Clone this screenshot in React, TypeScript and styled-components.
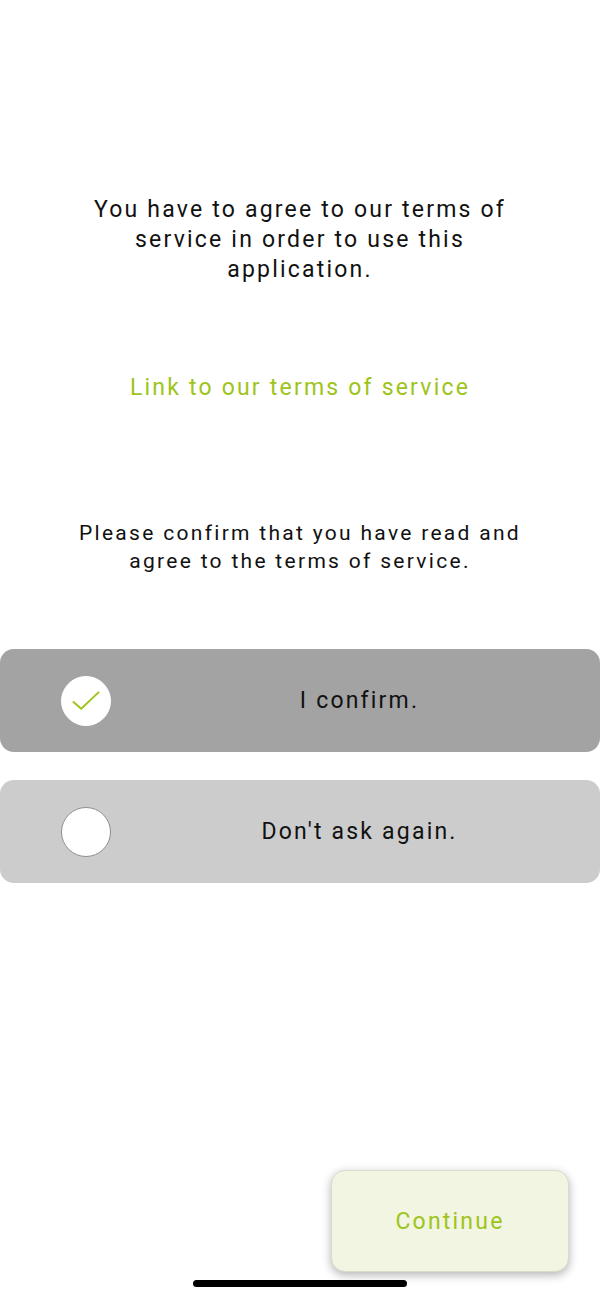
import React, { useState } from 'react';
import styled, { createGlobalStyle } from 'styled-components';

const GlobalStyle = createGlobalStyle`
	html, body {
		margin: 0;
		padding: 0;
		background: #ffffff;
	}
	body {
		font-family: Roboto, 'Liberation Sans', sans-serif;
		color: #111111;
	}
`;

const ACCENT = '#9dc41a';

const Page = styled.main`
	width: 600px;
	min-height: 1299px;
	display: flex;
	flex-direction: column;
	align-items: stretch;
	box-sizing: border-box;
`;

const Intro = styled.p`
	margin: 195px 88px 0;
	font-size: 23px;
	line-height: 30px;
	letter-spacing: 2.2px;
	text-align: center;
`;

const TermsLink = styled.a`
	align-self: center;
	margin-top: 89px;
	font-size: 23px;
	line-height: 28px;
	letter-spacing: 2.2px;
	color: ${ACCENT};
	text-decoration: none;
	cursor: pointer;
`;

const Prompt = styled.p`
	margin: 117px 70px 0;
	font-size: 21px;
	line-height: 28px;
	letter-spacing: 2.3px;
	text-align: center;
`;

const Options = styled.div`
	margin-top: 74px;
	display: flex;
	flex-direction: column;
	gap: 28px;
`;

const OptionRow = styled.button<{ $tone: 'dark' | 'light' }>`
	display: flex;
	align-items: center;
	height: 103px;
	padding: 0 0 0 61px;
	border: none;
	border-radius: 14px;
	background: ${(p) => (p.$tone === 'dark' ? '#a3a3a3' : '#cccccc')};
	font-family: inherit;
	cursor: pointer;
	text-align: left;
`;

const Radio = styled.span<{ $checked: boolean }>`
	flex: none;
	width: 50px;
	height: 50px;
	border-radius: 50%;
	background: #ffffff;
	box-sizing: border-box;
	border: 1px solid ${(p) => (p.$checked ? '#ffffff' : '#8f8f8f')};
	display: flex;
	align-items: center;
	justify-content: center;
`;

const OptionLabel = styled.span`
	flex: 1;
	text-align: center;
	font-size: 23px;
	letter-spacing: 2.2px;
	color: #111111;
	padding-left: 8px;
`;

const Footer = styled.footer`
	margin-top: auto;
	display: flex;
	flex-direction: column;
	align-items: stretch;
	padding-bottom: 12px;
`;

const ContinueButton = styled.button`
	align-self: flex-end;
	margin-right: 31px;
	width: 238px;
	height: 102px;
	border: 1px solid #d8dccb;
	border-radius: 14px;
	background: #f1f5e2;
	box-shadow: 0 3px 10px rgba(0, 0, 0, 0.3);
	font-family: inherit;
	font-size: 23px;
	letter-spacing: 2.2px;
	color: ${ACCENT};
	cursor: pointer;
`;

const HomeBar = styled.div`
	align-self: center;
	margin-top: 8px;
	width: 214px;
	height: 7px;
	border-radius: 4px;
	background: #000000;
`;

const CheckIcon = () => (
	<svg width="50" height="50" viewBox="0 0 50 50" fill="none">
		<path d="M12 26 L20 33 L38 16" stroke={ACCENT} strokeWidth="2" strokeLinecap="round" strokeLinejoin="round" />
	</svg>
);

const App = () => {
	const [confirmed, setConfirmed] = useState(true);
	const [dontAsk, setDontAsk] = useState(false);

	return (
		<>
			<GlobalStyle />
			<Page>
				<Intro>You have to agree to our terms of service in order to use this application.</Intro>
				<TermsLink>Link to our terms of service</TermsLink>
				<Prompt>Please confirm that you have read and agree to the terms of service.</Prompt>
				<Options>
					<OptionRow $tone='dark' onClick={() => setConfirmed(!confirmed)}>
						<Radio $checked={confirmed}>{confirmed && <CheckIcon />}</Radio>
						<OptionLabel>I confirm.</OptionLabel>
					</OptionRow>
					<OptionRow $tone='light' onClick={() => setDontAsk(!dontAsk)}>
						<Radio $checked={dontAsk}>{dontAsk && <CheckIcon />}</Radio>
						<OptionLabel>Don&apos;t ask again.</OptionLabel>
					</OptionRow>
				</Options>
				<Footer>
					<ContinueButton>Continue</ContinueButton>
					<HomeBar />
				</Footer>
			</Page>
		</>
	);
};

export default App;
